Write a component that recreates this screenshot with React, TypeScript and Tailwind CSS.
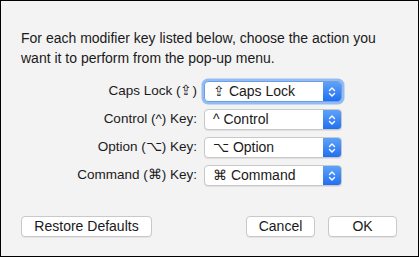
import React from "react";

const rows = [
  { label: "Caps Lock (⇪)", value: "⇪ Caps Lock", focus: true },
  { label: "Control (^) Key:", value: "^ Control" },
  { label: "Option (⌥) Key:", value: "⌥ Option" },
  { label: "Command (⌘) Key:", value: "⌘ Command" },
];

function Chevrons() {
  return (
    <svg width="8" height="12" viewBox="0 0 8 12" fill="none" stroke="white" strokeWidth="1.4" strokeLinecap="round" strokeLinejoin="round">
      <path d="M1.5 4.5 L4 2 L6.5 4.5" />
      <path d="M1.5 7.5 L4 10 L6.5 7.5" />
    </svg>
  );
}

function Popup({ value, focus }: { value: string; focus?: boolean }) {
  return (
    <div
      className={
        "flex h-[21px] w-[138px] items-stretch overflow-hidden rounded-[4px] bg-white " +
        (focus
          ? "border border-[#6c9fe6] shadow-[0_0_0_2.5px_#94bcf2]"
          : "border border-[#c8c8c8] shadow-[0_1px_0_rgba(0,0,0,0.08)]")
      }
    >
      <div className="flex flex-1 items-center pl-[8px] text-[14px] text-[#1a1a1a]">{value}</div>
      <div className="flex w-[18px] items-center justify-center bg-gradient-to-b from-[#5ea2f7] to-[#1f6ff0]">
        <Chevrons />
      </div>
    </div>
  );
}

function Btn({ children, w }: { children: React.ReactNode; w: string }) {
  return (
    <div
      className={
        "flex h-[21px] items-center justify-center rounded-[4px] border border-[#c9c9c9] bg-white text-[14px] text-[#1a1a1a] shadow-[0_1px_0_rgba(0,0,0,0.06)] " +
        w
      }
    >
      {children}
    </div>
  );
}

export default function App() {
  return (
    <div
      className="flex h-[257px] w-[419px] flex-col border border-black bg-[#f3f3f3] pl-[20px] pr-[21px] pt-[27px]"
      style={{ fontFamily: '"Liberation Sans", Arial, sans-serif' }}
    >
      <p className="text-[14px] leading-[20px] text-[#1a1a1a]">
        For each modifier key listed below, choose the action you
        <br />
        want it to perform from the pop-up menu.
      </p>
      <div className="mt-[13px] flex flex-col gap-[7px]">
        {rows.map((r) => (
          <div key={r.label} className="flex items-center">
            <div className="w-[183px] pr-[7px] text-right text-[13.5px] text-[#1a1a1a]">{r.label}</div>
            <Popup value={r.value} focus={r.focus} />
          </div>
        ))}
      </div>
      <div className="mt-[30px] flex items-center">
        <Btn w="w-[131px]">Restore Defaults</Btn>
        <div className="flex-1" />
        <Btn w="w-[69px]">Cancel</Btn>
        <div className="w-[13px]" />
        <Btn w="w-[69px]">OK</Btn>
      </div>
    </div>
  );
}
